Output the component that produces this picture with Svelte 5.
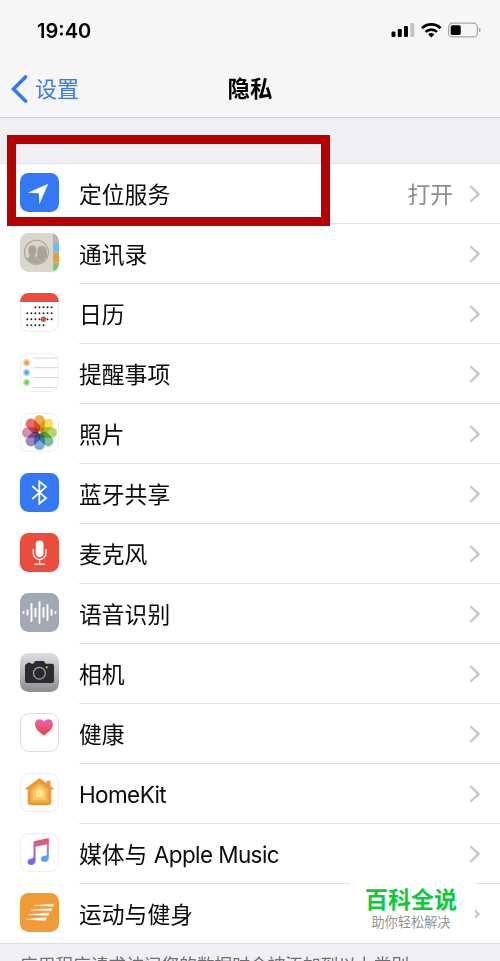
<!-- PrivacySettings.svelte -->
<script lang="ts">
  type Row = { id: string; label: string; latin?: string; value?: string };

  const rows: Row[] = [
    { id: 'location', label: '定位服务', value: '打开' },
    { id: 'contacts', label: '通讯录' },
    { id: 'calendar', label: '日历' },
    { id: 'reminders', label: '提醒事项' },
    { id: 'photos', label: '照片' },
    { id: 'bluetooth', label: '蓝牙共享' },
    { id: 'mic', label: '麦克风' },
    { id: 'speech', label: '语音识别' },
    { id: 'camera', label: '相机' },
    { id: 'health', label: '健康' },
    { id: 'homekit', label: '', latin: 'HomeKit' },
    { id: 'music', label: '媒体与 ', latin: 'Apple Music' },
    { id: 'fitness', label: '运动与健身' },
  ];

  // clockwise from the top
  const petals = ['#f09a38', '#ecdc3c', '#a9cf4f', '#62b584', '#5f9fdc', '#8a72b8', '#c47aac', '#e5534a'];

  // [x, half height]
  const wave = [[3.5, 0.6], [7.5, 2.2], [11.5, 8.5], [15.5, 3.8], [19.5, 10.5], [23.5, 4.6], [27.5, 7.6], [31.5, 2.2], [35.5, 0.6]];

  // [y, first column, last column]
  const days = [[14.3, 2, 6], [20.3, 0, 6], [26.3, 0, 6], [32.3, 0, 4]];
  const dots = days.flatMap(([y, a, b]) =>
    Array.from({ length: b - a + 1 }, (_, i) => ({ x: 7.3 + (a + i) * 4.05, y }))
  );
</script>

<div class="screen">
  <header>
    <div class="status">
      <span class="time">19:40</span>
      <svg class="indicators" width="92" height="18" viewBox="0 0 92 18">
        <rect x="1.5" y="9.5" width="4" height="5.5" rx="1.2" />
        <rect x="7.8" y="7" width="4" height="8" rx="1.2" />
        <rect x="14" y="4" width="4" height="11" rx="1.2" />
        <rect x="20.3" y="1" width="4" height="14" rx="1.2" fill="#c4c4c7" />
        <g fill="none" stroke="#000" stroke-width="2.7">
          <path d="M32 6.1a13.4 13.4 0 0 1 18.6 0" />
          <path d="M35.6 9.9a8.1 8.1 0 0 1 11.4 0" />
        </g>
        <path d="M38.2 12.4a4.4 4.4 0 0 1 6.2 0l-3.1 3.1z" />
        <rect x="58.6" y="1.2" width="28.8" height="13.6" rx="3.8" fill="none" stroke="#a5a5a8" stroke-width="1.2" />
        <rect x="60.7" y="3.2" width="10" height="9.7" rx="1.6" />
        <path d="M88.9 5.6q1.8.8 1.8 2.4t-1.8 2.4z" fill="#a5a5a8" />
      </svg>
    </div>
    <nav>
      <a class="back" href="#settings">
        <svg width="18" height="30" viewBox="0 0 18 30" fill="none" stroke="#3478f6" stroke-width="3.6" stroke-linecap="round">
          <path d="M14.5 3 2.5 15l12 12" />
        </svg>
        设置
      </a>
      <h1>隐私</h1>
    </nav>
  </header>

  <main>
    <div class="highlight"></div>
    <ul>
      {#each rows as row (row.id)}
        <li>
          <svg class="icon" width="39" height="39" viewBox="0 0 39 39">
            {#if row.id === 'location'}
              <rect width="39" height="39" rx="8.5" fill="#3478f6" />
              <path d="M28.3 10.7 19.3 31.3 18.8 20.2 7.7 19.7z" fill="#fff" />
            {:else if row.id === 'contacts'}
              <clipPath id="book"><rect width="39" height="39" rx="8.5" /></clipPath>
              <g clip-path="url(#book)">
                <rect width="39" height="39" fill="#d9d6cb" />
                <rect x="33" width="6" height="10" fill="#b9b7ae" />
                <rect x="34" y="10" width="5" height="9.5" fill="#6fbaf3" />
                <rect x="34" y="20" width="5" height="9.5" fill="#ee9a38" />
                <rect x="34" y="30" width="5" height="9" fill="#6fcf65" />
                <path d="M33.5 0v39" stroke="#b4b1a8" />
              </g>
              <clipPath id="people"><circle cx="16.4" cy="19.3" r="11.4" /></clipPath>
              <circle cx="16.4" cy="19.3" r="12" fill="none" stroke="#aaa39b" stroke-width="1.1" />
              <g clip-path="url(#people)" fill="#aaa29b">
                <path d="M21.600 12.700c4 0 5.200 3.200 5.200 6.300 0 2.300.5 3.700 1.700 5-1 .7-2.300 1-3.800 1 .4 1 4 1.600 5.300 3V33H17l-1-9c1.500-1.600 1.300-3.100 1.300-5 0-3.500 1.200-6.300 4.300-6.300z" />
                <path d="M12.400 12.300c3.200 0 4.300 2.300 4.200 5.200-.1 2.600-.8 3.900-1.700 5.200.1 3.500 6.400 2.500 7.300 10.300H2v-6c2.500-2 7.500-1.800 7.700-4.300-.9-1.300-1.500-2.700-1.600-5.200-.1-2.900 1.100-5.200 4.300-5.200z" stroke="#d9d6cb" stroke-width=".5" />
              </g>
            {:else if row.id === 'calendar'}
              <rect x=".5" y=".5" width="38" height="38" rx="8.3" fill="#fff" stroke="#ececec" />
              <path d="M0 9V8.500A8.500 8.500 0 0 1 8.500 0h22A8.500 8.500 0 0 1 39 8.500V9z" fill="#eb4d3d" />
              {#each dots as d}
                <circle cx={d.x} cy={d.y} r="1" fill="#222" />
              {/each}
              <circle cx="23.4" cy="26.300" r="2.700" fill="#eb4d3d" />
            {:else if row.id === 'reminders'}
              <rect x=".5" y=".5" width="38" height="38" rx="8.3" fill="#fff" stroke="#eee" />
              <path d="M13 5h24.500M13 14.700h25.500M13 24.500h25.500M13 34.400h24.500" stroke="#d8d8da" stroke-width="1" />
              {#each ['#f2a03d', '#4fabf7', '#76d35b'] as c, i}
                <circle cx="6.600" cy={9.7 + i * 9.8} r="3.600" fill={c} opacity=".45" />
                <circle cx="6.600" cy={9.7 + i * 9.8} r="2.200" fill={c} />
              {/each}
            {:else if row.id === 'photos'}
              <rect x=".5" y=".5" width="38" height="38" rx="8.3" fill="#fff" stroke="#eee" />
              {#each petals as c, i}
                <rect class="petal" x="14.200" y="2" width="10.600" height="16.800" rx="5.300" fill={c} transform={`rotate(${i * 45} 19.5 19.5)`} />
              {/each}
              <circle cx="19.500" cy="19.500" r="1" fill="#fff" />
            {:else if row.id === 'bluetooth'}
              <rect width="39" height="39" rx="8.5" fill="#3478f6" />
              <path d="M12.200 13 26 25.100 19.300 30.500V8.500L26 13.900 12.200 26" fill="none" stroke="#fff" stroke-width="1.800" />
            {:else if row.id === 'mic'}
              <rect width="39" height="39" rx="8.5" fill="#eb4d3d" />
              <rect x="15.700" y="7.500" width="7.800" height="16.500" rx="3.900" fill="#fff" />
              <path d="M13.300 16.500v3.700a6.300 6.300 0 0 0 12.600 0v-3.700M19.600 26.500V31M14.900 31.200h9.400" fill="none" stroke="#fff" stroke-width="1.300" stroke-linecap="round" />
            {:else if row.id === 'speech'}
              <rect width="39" height="39" rx="8.5" fill="#a2a9b4" />
              {#each wave as [x, h]}
                <path d={`M${x} ${19.5 - h}v${h * 2}`} stroke="#fff" stroke-width="1.900" stroke-linecap="round" />
              {/each}
            {:else if row.id === 'camera'}
              <linearGradient id="steel" x2="0" y2="1">
                <stop stop-color="#dfdfe3" />
                <stop offset="1" stop-color="#8d8d92" />
              </linearGradient>
              <rect width="39" height="39" rx="8.5" fill="url(#steel)" />
              <path d="M7 10.700q0-.9 1-.9h2q1 0 1 .9h2.200c1.100-.6 1.200-2.700 2.800-2.700h7c1.600 0 1.700 2.100 2.800 2.700H32q2 0 2 2V28q0 2-2 2H7q-2 0-2-2V12.700q0-1.600 2-2z" fill="#2b2b2d" />
              <circle cx="19.400" cy="20.200" r="5.900" fill="none" stroke="#a4a4a7" stroke-width="1.200" />
              <circle cx="26.800" cy="14.300" r="1.100" fill="#f0c330" />
            {:else if row.id === 'health'}
              <linearGradient id="heart" x2="0" y2="1">
                <stop stop-color="#ea64b4" />
                <stop offset="1" stop-color="#ea4335" />
              </linearGradient>
              <rect x=".5" y=".5" width="38" height="38" rx="8.3" fill="#fff" stroke="#dcdcde" />
              <path d="M23.900 22.500C19.500 19.200 15 16 15 11.300 15 8 17.200 6.200 19.600 6.200c2 0 3.500 1 4.300 2.500.8-1.500 2.300-2.500 4.300-2.500 2.600 0 4.700 1.800 4.700 5.100 0 4.700-4.600 7.900-9 11.200z" fill="url(#heart)" />
            {:else if row.id === 'homekit'}
              <rect x=".5" y=".5" width="38" height="38" rx="8.3" fill="#fff" stroke="#eee" />
              <path d="M19.500 5.500 27 11V8.200h3v5.100l3.500 2.700H30.800V30q0 1.500-1.500 1.500H9.700q-1.500 0-1.500-1.500V16H5.500z" fill="#ed9638" stroke="#ed9638" stroke-linejoin="round" />
              <path d="M19.500 9.500 28 16v13H11V16z" fill="#f3b04b" stroke="#f3b04b" stroke-linejoin="round" />
              <path d="m19.500 12.500 6 4.700V26.500h-12v-9.300z" fill="#f6c965" stroke="#f6c965" stroke-linejoin="round" />
              <path d="m19.500 16 3.200 2.500v5h-6.400v-5z" fill="#fae88a" stroke="#fae88a" stroke-linejoin="round" />
            {:else if row.id === 'music'}
              <linearGradient id="tune" gradientUnits="userSpaceOnUse" x1="22" y1="6" x2="18" y2="31">
                <stop stop-color="#ea5468" />
                <stop offset=".5" stop-color="#b56bc0" />
                <stop offset=".85" stop-color="#7768f2" />
              </linearGradient>
              <linearGradient id="tuneRight" gradientUnits="userSpaceOnUse" x1="26" y1="6" x2="26" y2="29">
                <stop stop-color="#ea5468" />
                <stop offset=".4" stop-color="#b978c8" />
                <stop offset=".8" stop-color="#55a5ee" />
              </linearGradient>
              <rect x=".5" y=".5" width="38" height="38" rx="8.3" fill="#fff" stroke="#eee" />
              <path d="M28.800 6.500V24.500c0 3-1.700 4.600-4.400 4.600-2.200 0-3.600-1.200-3.600-3 0-2.100 1.700-3.100 4-3.300 1.600-.2 2-.7 2-2.100V11z" fill="url(#tuneRight)" />
              <path d="M28.800 5.500V11l-13.200 2.700V27c0 3.200-1.700 5-4.400 5-2.200 0-3.700-1.300-3.700-3.200 0-2 1.600-3.100 3.900-3.400 1.700-.2 2.100-.7 2.100-2.200V9.500q0-1.300 1.300-1.600L27.500 5.300q1.300-.3 1.300.2z" fill="url(#tune)" />
            {:else}
              <rect width="39" height="39" rx="8.5" fill="#f19a38" />
              <path d="M33.800 11 33.200 13.200 14 12.500zM32 15.400 31.300 17.800 11 17zM29 19.900 28.200 22.400 8.500 21.700zM26.300 24.600 25.500 27.600 6 26.300z" fill="#fff" stroke="#fff" stroke-width=".4" />
            {/if}
          </svg>
          <div class="cell">
            <span class="label">{row.label}{#if row.latin}<span class="latin">{row.latin}</span>{/if}</span>
            {#if row.value}<span class="value">{row.value}</span>{/if}
            <svg class="chevron" width="12" height="20" viewBox="0 0 12 20" fill="none" stroke="#c5c5ca" stroke-width="2.300">
              <path d="m1.500 2.200 8 7.800-8 7.800" />
            </svg>
          </div>
        </li>
      {/each}
    </ul>
    <p class="note">应用程序请求访问您的数据时会被添加到以上类别</p>
  </main>

  <div class="watermark">
    <strong>百科全说</strong>
    <small>助你轻松解决</small>
  </div>
</div>

<style>
  :global(body) {
    margin: 0;
    overflow: hidden;
  }

  .screen {
    position: relative;
    box-sizing: border-box;
    width: 500px;
    height: 961px;
    overflow: hidden;
    background: #efeff4;
    color: #0a0a0a;
    font-family: Inter, "Noto Sans CJK SC", sans-serif;
  }

  header {
    box-sizing: border-box;
    height: 118px;
    background: #f6f6f8;
    border-bottom: 1px solid #cfcfd3;
  }

  .status {
    display: flex;
    justify-content: space-between;
    align-items: center;
    height: 62px;
    padding: 0 18px 0 37px;
  }

  .time {
    font-size: 20px;
    font-weight: 600;
    color: #000;
  }

  nav {
    display: grid;
    grid-template-columns: 1fr auto 1fr;
    align-items: center;
    height: 53px;
  }

  .back {
    display: flex;
    align-items: center;
    gap: 6px;
    padding-left: 11px;
    font-size: 22px;
    line-height: 30px;
    color: #3478f6;
    text-decoration: none;
  }

  h1 {
    margin: 0;
    font-size: 22.4px;
    line-height: 30px;
    font-weight: 600;
    color: #000;
  }

  main {
    position: relative;
    padding-top: 46px;
  }

  ul {
    margin: 0;
    padding: 0;
    list-style: none;
    background: #fff;
    box-shadow: 0 -1px #e4e4e8;
  }

  li {
    display: flex;
    height: 60px;
    padding-left: 20px;
  }

  .icon {
    flex: none;
    margin: 9px 20px 0 0;
  }

  .petal {
    mix-blend-mode: multiply;
    opacity: .85;
  }

  .cell {
    display: flex;
    flex: 1;
    align-items: center;
    box-sizing: border-box;
    padding-right: 19px;
    border-bottom: 1px solid #e3e3e6;
  }

  li:last-child {
    border-bottom: 1px solid #dcdce0;
    box-sizing: border-box;
  }

  li:last-child .cell {
    border-bottom: 0;
  }

  .label {
    flex: 1;
    padding-top: 3px;
    font-size: 22.8px;
    line-height: 32px;
    white-space: pre;
  }

  .latin {
    font-size: 22.5px;
    letter-spacing: -.6px;
  }

  .value {
    margin-right: 16px;
    padding-top: 3px;
    font-size: 22.8px;
    line-height: 32px;
    color: #8e8e93;
  }

  .highlight {
    position: absolute;
    z-index: 1;
    top: 17px;
    left: 7px;
    box-sizing: border-box;
    width: 323px;
    height: 91px;
    border: 9px solid #b90000;
  }

  .note {
    margin: 10px 0 0 20px;
    font-size: 17.7px;
    line-height: 24px;
    color: #6d6d72;
    white-space: nowrap;
  }

  .watermark {
    position: absolute;
    top: 872px;
    left: 350px;
    display: flex;
    flex-direction: column;
    align-items: center;
    width: 125px;
    height: 70px;
    padding: 13px 3px 0 0;
    box-sizing: border-box;
    background: #fff;
    text-align: center;
  }

  .watermark strong {
    font-size: 23px;
    line-height: 31px;
    font-weight: 700;
    color: #0acb3a;
  }

  .watermark small {
    font-size: 13.2px;
    line-height: 12px;
    color: #949494;
  }
</style>
